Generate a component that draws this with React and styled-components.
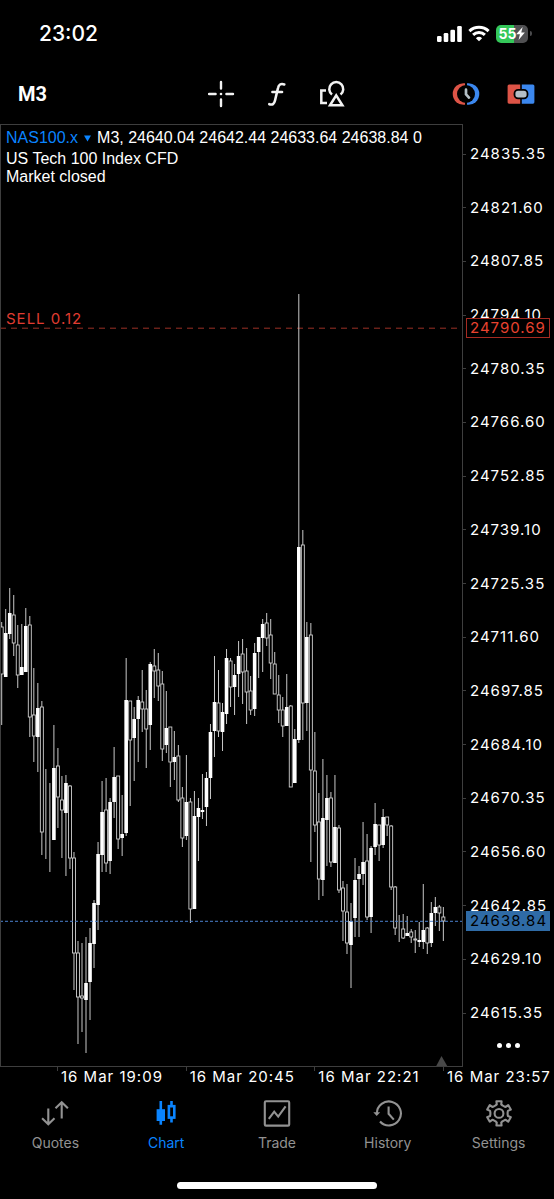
import React from "react";
import styled, { createGlobalStyle } from "styled-components";

const GlobalStyle = createGlobalStyle`
  *, *::before, *::after { box-sizing: border-box; }
  html, body { margin: 0; background: #000; }
  body { font-family: Inter, "Liberation Sans", sans-serif; color: #fff; }
  button { font: inherit; color: inherit; background: none; border: 0; padding: 0; margin: 0; cursor: pointer; }
  svg { display: block; flex: none; }
`;

const line = "#3e3e3e";
const blue = "#0a84ff";

const Screen = styled.div`
  display: flex;
  flex-direction: column;
  min-height: 100vh;
  background: #000;
  overflow: hidden;
`;

const StatusBar = styled.header`
  display: flex;
  align-items: center;
  justify-content: space-between;
  height: 66px;
  padding: 1px 22px 0 39px;
`;

const Clock = styled.time`
  font-size: 21px;
  font-weight: 500;
  line-height: 24px;
`;

const StatusIcons = styled.div`
  display: flex;
  align-items: center;
  gap: 6px;
`;

const Battery = styled.div`
  display: flex;
  align-items: center;
  gap: 2px;
  &::after {
    content: "";
    width: 2px;
    height: 5px;
    border-radius: 0 2px 2px 0;
    background: #4a4a4c;
  }
`;

const BatteryLevel = styled.div`
  display: flex;
  align-items: center;
  justify-content: center;
  width: 32px;
  height: 18px;
  border-radius: 5px;
  background: linear-gradient(90deg, #34c759 ${(p) => p.$level}%, #505052 ${(p) => p.$level}%);
  font-size: 14px;
  font-weight: 700;
  line-height: 18px;
`;

const Toolbar = styled.nav`
  display: grid;
  grid-template-columns: 1fr auto 1fr;
  align-items: center;
  height: 58px;
  padding: 0 19px 3px 18px;
`;

const Timeframe = styled.button`
  justify-self: start;
  font-family: Roboto, sans-serif;
  font-size: 20px;
  font-weight: 700;
  line-height: 28px;
`;

const ToolGroup = styled.div`
  display: flex;
  justify-content: ${(p) => (p.$end ? "flex-end" : "center")};
  gap: 27px;
`;

const IconButton = styled.button`
  display: flex;
`;

const ChartArea = styled.main`
  display: flex;
  flex: 1;
  min-height: 640px;
`;

const Plot = styled.section`
  position: relative;
  flex: 1;
  min-width: 0;
  border: 1px solid ${line};
`;

const Drawing = styled.svg`
  position: absolute;
  inset: 0;
  width: 100%;
  height: 100%;
`;

const Legend = styled.div`
  position: relative;
  padding: 1px 0 0 5px;
  font-family: "Liberation Sans", Arial, sans-serif;
  font-size: 16px;
  line-height: 18px;
  white-space: nowrap;
`;

const LegendHead = styled.div`
  display: flex;
  align-items: center;
  gap: 6px;
  height: 24px;
`;

const SymbolButton = styled.button`
  display: flex;
  align-items: center;
  gap: 6px;
  color: ${blue};
`;

const OrderLabel = styled.div`
  position: absolute;
  left: 5px;
  top: 20.6%;
  transform: translateY(-50%);
  font-size: 15px;
  line-height: 18px;
  letter-spacing: 1px;
  color: #e03c31;
`;

const PriceAxis = styled.aside`
  position: relative;
  display: flex;
  flex-direction: column;
  justify-content: space-between;
  width: 91px;
  padding: 21px 0 13px;
`;

const PriceList = styled.ol`
  display: flex;
  flex-direction: column;
  justify-content: space-between;
  flex: 1;
  margin: 0;
  padding: 0;
  list-style: none;
`;

const Price = styled.li`
  display: flex;
  align-items: center;
  gap: 4px;
  height: 18px;
  font-size: 15px;
  line-height: 18px;
  letter-spacing: 1px;
  &::before {
    content: "";
    width: 3px;
    height: 1px;
    background: ${line};
  }
`;

const PriceTag = styled.div`
  position: absolute;
  left: 3px;
  right: 4px;
  top: ${(p) => p.$top}%;
  transform: translateY(-50%);
  padding-left: 3px;
  font-size: 15px;
  line-height: 18px;
  letter-spacing: 1px;
  border: 1px solid ${(p) => (p.$order ? "#a62b22" : "#2f6ba6")};
  background: ${(p) => (p.$order ? "#000" : "#2f6ba6")};
  color: ${(p) => (p.$order ? "#e8432f" : "#000")};
`;

const More = styled.button`
  display: flex;
  align-self: center;
  gap: 4px;
  height: 18px;
  margin-top: 14px;
  align-items: center;
`;

const Dot = styled.span`
  width: 5px;
  height: 5px;
  border-radius: 50%;
  background: #fff;
`;

const TimeAxis = styled.ol`
  display: flex;
  margin: 0;
  padding: 0 0 0 57px;
  list-style: none;
`;

const Time = styled.li`
  flex: 1;
  padding: 1px 0 0 4px;
  font-size: 15px;
  line-height: 18px;
  letter-spacing: 1px;
  white-space: nowrap;
  background: linear-gradient(${line}, ${line}) 0 0 / 1px 4px no-repeat;
  &:last-child { flex: 0 0 111px; }
`;

const TabBar = styled.nav`
  display: grid;
  grid-template-columns: repeat(5, 1fr);
  padding-top: 12px;
`;

const Tab = styled.button`
  display: flex;
  flex-direction: column;
  align-items: center;
  gap: 6px;
  font-size: 14px;
  line-height: 18px;
  color: ${(p) => (p.$active ? blue : "#929292")};
`;

const HomeIndicator = styled.div`
  width: 36%;
  height: 7px;
  margin: 30px auto 10px;
  border-radius: 4px;
  background: #fff;
`;

const prices = [
  "24835.35", "24821.60", "24807.85", "24794.10", "24780.35", "24766.60",
  "24752.85", "24739.10", "24725.35", "24711.60", "24697.85", "24684.10",
  "24670.35", "24656.60", "24642.85", "24629.10", "24615.35",
];

const times = ["16 Mar 19:09", "16 Mar 20:45", "16 Mar 22:21", "16 Mar 23:57"];

// high, body top, body bottom, low, filled
const candles = [
  [622, 627, 674, 725, 0], [609, 633, 677, 677, 1], [588, 613, 634, 639, 1], [595, 615, 643, 656, 0],
  [625, 645, 675, 688, 0], [624, 667, 675, 675, 1], [608, 626, 672, 672, 1], [616, 625, 717, 737, 0],
  [668, 715, 736, 762, 0], [683, 708, 737, 772, 1], [701, 707, 832, 855, 0], [769, 836, 836, 859, 0],
  [783, 837, 837, 872, 0], [725, 768, 840, 840, 1], [748, 766, 797, 828, 0], [776, 800, 810, 858, 0],
  [775, 783, 813, 876, 1], [785, 786, 858, 869, 0], [852, 858, 953, 990, 0], [941, 953, 997, 1044, 0],
  [943, 996, 998, 1032, 0], [937, 983, 1000, 1053, 1], [928, 943, 982, 1020, 1], [900, 903, 944, 968, 1],
  [842, 854, 905, 930, 1], [781, 812, 855, 872, 1], [778, 810, 863, 872, 0], [798, 802, 861, 874, 1],
  [747, 777, 802, 818, 1], [776, 776, 839, 849, 0], [795, 834, 838, 856, 1], [658, 700, 833, 836, 1],
  [701, 701, 740, 806, 0], [707, 719, 738, 781, 1], [696, 700, 719, 762, 1], [670, 702, 709, 732, 0],
  [690, 709, 729, 768, 0], [662, 664, 725, 750, 1], [649, 666, 671, 698, 0], [653, 670, 686, 701, 0],
  [671, 684, 749, 761, 0], [691, 728, 745, 753, 1], [727, 727, 762, 787, 0], [731, 757, 762, 780, 1],
  [745, 756, 800, 802, 0], [787, 798, 838, 847, 0], [755, 802, 836, 840, 1], [798, 802, 909, 923, 0],
  [791, 816, 909, 909, 1], [798, 808, 817, 861, 1], [774, 810, 812, 819, 1], [772, 778, 807, 826, 1],
  [724, 732, 778, 799, 1], [656, 702, 731, 757, 1], [670, 703, 731, 737, 0], [703, 712, 732, 751, 1],
  [649, 658, 714, 724, 1], [658, 661, 687, 707, 0], [664, 675, 687, 715, 1], [641, 656, 674, 697, 1],
  [639, 654, 672, 704, 0], [648, 671, 692, 724, 0], [676, 691, 710, 715, 0], [643, 653, 709, 716, 1],
  [637, 637, 652, 678, 1], [619, 624, 638, 672, 1], [613, 623, 638, 646, 0], [619, 635, 663, 679, 0],
  [652, 664, 694, 694, 0], [675, 695, 710, 723, 0], [697, 710, 726, 737, 0], [674, 707, 726, 726, 1],
  [705, 706, 787, 787, 0], [729, 739, 783, 783, 1], [294, 547, 740, 743, 1], [530, 545, 703, 740, 0],
  [622, 637, 703, 731, 1], [623, 635, 770, 862, 0], [732, 771, 825, 832, 0], [793, 822, 879, 900, 0],
  [759, 818, 880, 896, 1], [775, 798, 820, 866, 1], [792, 798, 862, 867, 0], [775, 827, 863, 863, 1],
  [825, 828, 890, 893, 0], [881, 888, 911, 941, 0], [884, 912, 943, 954, 0], [903, 921, 945, 988, 1],
  [858, 880, 918, 937, 1], [866, 874, 879, 937, 1], [822, 862, 874, 885, 1], [834, 861, 917, 920, 0],
  [846, 848, 917, 933, 1], [803, 824, 847, 855, 1], [825, 825, 845, 861, 0], [809, 817, 845, 848, 1],
  [817, 817, 825, 836, 0], [825, 826, 887, 890, 0], [886, 887, 928, 935, 0], [915, 928, 928, 942, 0],
  [914, 929, 938, 939, 0], [916, 933, 936, 936, 1], [929, 932, 937, 943, 0], [930, 939, 940, 953, 0],
  [922, 940, 942, 947, 1], [884, 930, 942, 949, 1], [927, 928, 943, 954, 0], [902, 913, 943, 947, 1],
  [897, 907, 913, 926, 1], [905, 907, 913, 931, 0], [907, 917, 921, 941, 0],
];

function Candle({ x, data: [high, top, bottom, low, filled] }) {
  return (
    <g>
      <path d={`M${x} ${high}V${low}`} stroke="#c8c8c8" />
      {filled ? (
        <rect x={x - 1.8} y={top} width="3.6" height={bottom - top} fill="#fff" />
      ) : (
        <rect x={x - 1.5} y={top} width="3" height={bottom - top} fill="#000" stroke="#d0d0d0" strokeWidth="0.9" />
      )}
    </g>
  );
}

function PriceChart() {
  return (
    <Drawing viewBox="1 125 461 941" preserveAspectRatio="none" role="img" aria-label="NAS100.x candlestick chart">
      <path d="M0 328.2H463" stroke="#9c3026" strokeDasharray="6 5" />
      <path d="M436 1066.5L441.5 1056L447.5 1066.5Z" fill="#484848" />
      {candles.map((c, i) => (
        <Candle key={i} x={1.7 + i * 4.015} data={c} />
      ))}
      <path d="M0 921.3H463" stroke="#4a80cc" strokeDasharray="3 2" />
    </Drawing>
  );
}

const SignalIcon = () => (
  <svg width="25" height="16" viewBox="0 0 25 16" fill="#fff" aria-hidden="true">
    <rect x="0" y="10" width="4.6" height="6" rx="1.3" />
    <rect x="6.7" y="7" width="4.6" height="9" rx="1.3" />
    <rect x="13.4" y="3.7" width="4.6" height="12.3" rx="1.3" />
    <rect x="20.2" y="0" width="4.6" height="16" rx="1.3" />
  </svg>
);

const WifiIcon = () => (
  <svg width="22" height="17" viewBox="0 0 22 17" fill="none" stroke="#fff" strokeWidth="3" aria-hidden="true">
    <path d="M1.4 6.1A14 14 0 0 1 20.6 6.1" />
    <path d="M5.1 9.9A8.6 8.6 0 0 1 16.9 9.9" />
    <path d="M11 16.3L7.9 13.2A4.5 4.5 0 0 1 14.1 13.2Z" fill="#fff" stroke="none" />
  </svg>
);

const BoltIcon = () => (
  <svg width="9" height="13" viewBox="0 0 8 12" fill="#fff" aria-hidden="true">
    <path d="M6 0L0 6.8H3.5L2.2 12L8 5H4.7Z" />
  </svg>
);

const CrosshairIcon = () => (
  <svg width="28" height="28" viewBox="0 0 28 28" fill="none" stroke="#f2f2f2" strokeWidth="2.4" strokeLinecap="round" aria-hidden="true">
    <path d="M13 2V8.6M13 19.4V26M1 14H7.6M18.4 14H25" />
    <circle cx="13" cy="14" r="1.3" fill="#f2f2f2" stroke="none" />
  </svg>
);

const FunctionIcon = () => (
  <svg width="28" height="28" viewBox="0 0 28 28" fill="none" stroke="#f2f2f2" strokeWidth="2.6" strokeLinecap="round" aria-hidden="true">
    <path d="M21.3 4.4C17.6 3.2 15.7 4.7 15 8L12 20.5C11.2 24 9.4 25.2 6.3 24.2" />
    <path d="M9.4 12H19" />
  </svg>
);

const ShapesIcon = () => (
  <svg width="28" height="28" viewBox="0 0 28 28" fill="none" stroke="#f2f2f2" strokeWidth="2.5" aria-hidden="true">
    <path d="M8 10.6H3.3V23H9" />
    <path d="M14 14.6A7 7 0 1 1 22.5 14.6" />
    <path d="M18.2 15.4L24.4 25.3H12Z" />
  </svg>
);

const SessionIcon = () => (
  <svg width="28" height="28" viewBox="0 0 28 28" aria-hidden="true">
    <path d="M13 3.3A10.8 10.8 0 1 0 13 24.7Z" fill="#dd5447" />
    <path d="M15 3.3A10.8 10.8 0 1 1 15 24.7Z" fill="#3b87ee" />
    <circle cx="14" cy="14" r="9" fill="#000" />
    <path d="M14 9.7V14.3L17 17.6" fill="none" stroke="#b4bfc6" strokeWidth="2.7" strokeLinecap="round" />
  </svg>
);

const OneClickIcon = () => (
  <svg width="28" height="28" viewBox="0 0 28 28" aria-hidden="true">
    <path d="M2.3 4.4H13.2V23.7H2.3A1.6 1.6 0 0 1 0.6 22V6A1.6 1.6 0 0 1 2.3 4.4Z" fill="#dd5447" />
    <path d="M14.8 4.4H25.7A1.6 1.6 0 0 1 27.4 6V22A1.6 1.6 0 0 1 25.7 23.7H14.8Z" fill="#3b87ee" />
    <rect x="7.5" y="9.8" width="13" height="8.6" rx="3.6" fill="#b4bfc6" stroke="#000" strokeWidth="1.8" />
  </svg>
);

const tabIcon = { width: 30, height: 30, viewBox: "0 0 30 30", fill: "none", stroke: "currentColor", strokeWidth: 2.1, "aria-hidden": true };

const QuotesIcon = () => (
  <svg {...tabIcon}>
    <path d="M8.3 10.5V26M2.1 20.2L8.3 26.2L14.5 20.2" />
    <path d="M21.7 20.5V4.5M15.5 10.3L21.7 4.3L27.9 10.3" />
  </svg>
);

const CandlesIcon = () => (
  <svg {...tabIcon} strokeWidth="2.6">
    <path d="M9.8 3V26.8M20.5 3V7M20.5 20V24.5" />
    <rect x="5.6" y="11.2" width="8.4" height="11.8" fill="currentColor" stroke="none" />
    <rect x="17.9" y="8.2" width="5.4" height="11.4" />
  </svg>
);

const TradeIcon = () => (
  <svg {...tabIcon}>
    <rect x="2.8" y="3.2" width="24.4" height="24.4" rx="1.2" />
    <path d="M6.8 20.8L12.2 13.6L16.2 18.6L23.6 8.4" />
  </svg>
);

const HistoryIcon = () => (
  <svg {...tabIcon}>
    <path d="M3.9 15.5A12 12 0 1 1 7 23.5" />
    <path d="M0.3 14.2H7.2L3.7 18Z" fill="currentColor" stroke="none" />
    <path d="M15.6 8.6V15.8L20.8 21.6" />
  </svg>
);

const gearPoints = [0, 60, 120, 180, 240, 300]
  .flatMap((a) => [[a - 23, 8.7], [a - 14, 9.3], [a - 12, 12.4], [a + 12, 12.4], [a + 14, 9.3], [a + 23, 8.7]])
  .map(([a, r]) => {
    const t = (a * Math.PI) / 180;
    return `${(15 + r * Math.sin(t)).toFixed(2)},${(15.4 - r * Math.cos(t)).toFixed(2)}`;
  })
  .join(" ");

const SettingsIcon = () => (
  <svg {...tabIcon} strokeLinejoin="round">
    <polygon points={gearPoints} />
    <circle cx="15" cy="15.4" r="4.4" />
  </svg>
);

const tabs = [
  ["Quotes", QuotesIcon],
  ["Chart", CandlesIcon],
  ["Trade", TradeIcon],
  ["History", HistoryIcon],
  ["Settings", SettingsIcon],
];

export default function App() {
  return (
    <Screen>
      <GlobalStyle />
      <StatusBar>
        <Clock>23:02</Clock>
        <StatusIcons>
          <SignalIcon />
          <WifiIcon />
          <Battery>
            <BatteryLevel $level={55}>55<BoltIcon /></BatteryLevel>
          </Battery>
        </StatusIcons>
      </StatusBar>
      <Toolbar aria-label="Chart tools">
        <Timeframe>M3</Timeframe>
        <ToolGroup>
          <IconButton aria-label="Crosshair"><CrosshairIcon /></IconButton>
          <IconButton aria-label="Indicators"><FunctionIcon /></IconButton>
          <IconButton aria-label="Objects"><ShapesIcon /></IconButton>
        </ToolGroup>
        <ToolGroup $end>
          <IconButton aria-label="Sessions"><SessionIcon /></IconButton>
          <IconButton aria-label="One-click trading"><OneClickIcon /></IconButton>
        </ToolGroup>
      </Toolbar>
      <ChartArea>
        <Plot>
          <PriceChart />
          <Legend>
            <LegendHead>
              <SymbolButton>
                NAS100.x
                <svg width="7" height="7" viewBox="0 0 7 7" fill="currentColor" aria-hidden="true">
                  <path d="M0 0.5H7L3.5 6.5Z" />
                </svg>
              </SymbolButton>
              <span>M3, 24640.04 24642.44 24633.64 24638.84 0</span>
            </LegendHead>
            <div>US Tech 100 Index CFD</div>
            <div>Market closed</div>
          </Legend>
          <OrderLabel>SELL 0.12</OrderLabel>
        </Plot>
        <PriceAxis>
          <PriceList>
            {prices.map((p) => <Price key={p}>{p}</Price>)}
          </PriceList>
          <PriceTag $top={21.6} $order>24790.69</PriceTag>
          <PriceTag $top={84.5}>24638.84</PriceTag>
          <More aria-label="More"><Dot /><Dot /><Dot /></More>
        </PriceAxis>
      </ChartArea>
      <TimeAxis>
        {times.map((t) => <Time key={t}>{t}</Time>)}
      </TimeAxis>
      <TabBar aria-label="Main">
        {tabs.map(([name, Icon]) => (
          <Tab key={name} $active={name === "Chart"}>
            <Icon />
            {name}
          </Tab>
        ))}
      </TabBar>
      <HomeIndicator />
    </Screen>
  );
}
